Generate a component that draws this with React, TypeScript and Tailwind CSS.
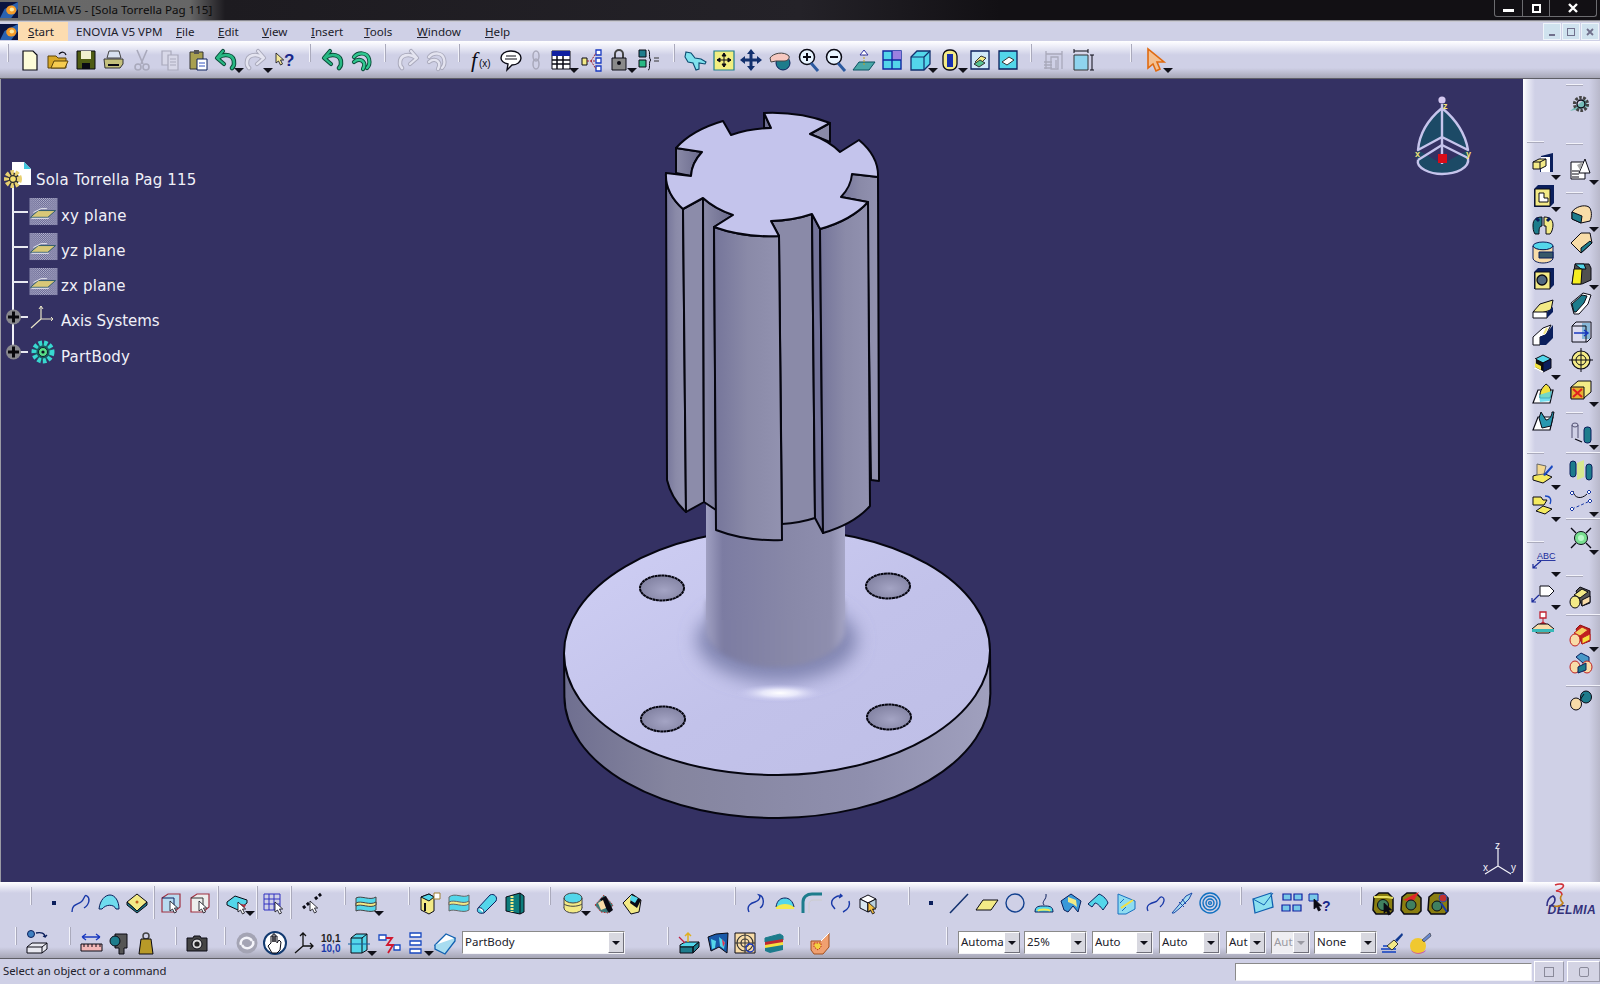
import type { ReactNode } from 'react';

// Shared colours for the little toolbar pictures
const NAVY = '#0b1f5c';
const CYAN = '#53d6ea';
const YEL = '#f3ea86';
const CREAM = '#f8dca8';
const TEAL = '#1d7c8c';
const GRN = '#28b884';
const GRY = '#a9a9bb';
const K = '#0a0a14';

const cube = (top: string, front: string, side: string) => (
  <>
    <path d="M4 8l8-4 8 4-8 4z" fill={top} stroke={K} strokeLinejoin="round" />
    <path d="M4 8v9l8 4v-9z" fill={front} stroke={K} strokeLinejoin="round" />
    <path d="M20 8v9l-8 4v-9z" fill={side} stroke={K} strokeLinejoin="round" />
  </>
);

const cursor = (x: number, y: number, fill = '#fff') => (
  <path transform={`translate(${x} ${y})`} d="M0 0v10l2.5-2 2 4 2-1-2-4h3.2z" fill={fill} stroke={K} strokeWidth="0.8" />
);

// hooked arrow drawn twice, outline then fill, the way the undo glyphs look
const hook = (line: string, fill: string, mirror = false) => (
  <g transform={mirror ? 'matrix(-1 0 0 1 24 0)' : undefined} fill="none" strokeLinecap="round" strokeLinejoin="round">
    <path d="M4 10C10 5 21 6 20 16c0 1-1 3-2 4" stroke={line} strokeWidth="4.6" />
    <path d="M9 3L3 10l7 6" stroke={line} strokeWidth="4.2" />
    <path d="M4 10C10 5 21 6 20 16c0 1-1 3-2 4" stroke={fill} strokeWidth="2.6" />
    <path d="M9 3L3 10l7 6" stroke={fill} strokeWidth="2.2" />
  </g>
);

const icons: Record<string, ReactNode> = {
  // top toolbar
  new: <path d="M5 3h10l4 4v15H5z" fill="#fdfbd8" stroke={K} strokeWidth="1.2" />,
  open: <><path d="M2 8h8l2 2h8v10H2z" fill="#d8a828" stroke="#5a4208" /><path d="M5 20l3-7h14l-3 7z" fill="#f6cc50" stroke="#5a4208" /><path d="M13 6c3-3 6-2 7 1" fill="none" stroke={K} strokeWidth="1.2" /></>,
  save: <><path d="M3 3h18v18H3z" fill="#4f5c14" stroke={K} /><path d="M7 3h10v8H7z" fill="#f0f0d0" /><path d="M8 15h8v6H8z" fill={K} /></>,
  print: <><path d="M7 3h10l2 7H5z" fill="#d8e0f0" stroke="#444" /><path d="M2 11h19v5l-3 4H3z" fill="#c4c07c" stroke="#333" /><path d="M6 17h11" stroke={K} strokeWidth="2" /></>,
  cut: <g fill="none" stroke={GRY} strokeWidth="1.6"><path d="M7 2l6 14M17 2l-6 14" /><circle cx="8" cy="19" r="3" /><circle cx="16" cy="19" r="3" /></g>,
  copy: <g fill="#d8d8e8" stroke={GRY} strokeWidth="1.2"><path d="M4 3h9v14H4z" /><path d="M10 7h10v15H10z" /><path d="M12 11h6M12 14h6M12 17h6" /></g>,
  paste: <><path d="M4 4h13v17H4z" fill="#a8a050" stroke="#333" /><path d="M8 2h5v4H8z" fill="#555" /><path d="M11 11h10v11H11z" fill="#fff" stroke={NAVY} /><path d="M13 15h6M13 18h6" stroke="#3050c0" /></>,
  undo: hook('#0a4a38', GRN),
  redoOff: hook(GRY, '#e4e4f0', true),
  help: <>{cursor(3, 5, '#f4e89a')}<text x="11" y="18" fontFamily="Liberation Sans" fontWeight="700" fontSize="17" fill="#18288a">?</text></>,
  undoB: hook('#0a4a38', GRN),
  redoG: <g fill="none" strokeLinecap="round"><path d="M5 9c4-5 13-5 15 2 1 4 0 7-2 9M5 14c3-3 8-3 10 1 1 2 0 4-1 6" stroke="#0a4a38" strokeWidth="4.2" /><path d="M5 9c4-5 13-5 15 2 1 4 0 7-2 9M5 14c3-3 8-3 10 1 1 2 0 4-1 6" stroke="#30c890" strokeWidth="2.4" /></g>,
  redoOff2: <g fill="none" strokeLinecap="round"><path d="M5 9c4-5 13-5 15 2 1 4 0 7-2 9M5 14c3-3 8-3 10 1 1 2 0 4-1 6" stroke={GRY} strokeWidth="4.2" /><path d="M5 9c4-5 13-5 15 2 1 4 0 7-2 9M5 14c3-3 8-3 10 1 1 2 0 4-1 6" stroke="#e4e4f0" strokeWidth="2.4" /></g>,
  fx: <><text x="1" y="19" fontFamily="Liberation Serif" fontStyle="italic" fontSize="22" fill={K}>f</text><text x="9" y="19" fontFamily="Liberation Sans" fontSize="10" fill={K}>(x)</text></>,
  speech: <><path d="M12 3c6 0 10 3 10 7s-4 7-9 7l-5 5 1-6c-4-1-7-3-7-6 0-4 4-7 10-7z" fill="#fff" stroke={K} strokeWidth="1.4" /><path d="M7 8h10M6 11h12" stroke={K} /></>,
  chain: <g fill="none" stroke={GRY} strokeWidth="1.5"><ellipse cx="12" cy="8" rx="3" ry="5" /><ellipse cx="12" cy="16" rx="3" ry="5" /></g>,
  table: <><path d="M3 3h18v18H3z" fill="#fff" stroke={K} /><path d="M3 3h18v5H3z" fill="#1020a0" /><path d="M3 12h18M3 16h18M8 8v13M14 8v13" stroke={K} strokeWidth="1.5" /></>,
  net: <><path d="M3 10h5v7H3z" fill={YEL} stroke={K} /><g fill="#fff" stroke="#1838c0" strokeWidth="1.3"><path d="M17 2h5v5h-5zM17 10h5v5h-5zM17 18h5v5h-5z" /></g><path d="M8 13h9M12 13l5-8M12 13l5 8" stroke="#a02030" strokeDasharray="2 1" /></>,
  lock: <><path d="M8 11V6a4 4 0 018 0v5" fill="none" stroke="#444" strokeWidth="2" /><path d="M5 10h14v12H5z" fill="#8a8a8a" stroke={K} /><circle cx="12" cy="15" r="2" fill={K} /></>,
  eq: <><path d="M2 2h7v7H2z" fill={TEAL} stroke={K} /><path d="M2 12h7v7H2z" fill={GRN} stroke={K} /><path d="M11 2c3 0 0 9 3 10-3 1 0 10-3 10" fill="none" stroke={K} /><path d="M17 10h5M17 13h5" stroke="#333" /></>,
  plane: <path d="M2 4l5 1 4 5 6 1 5 3-1 2-6-1 0 6-3 1-3-7-5-1-3-5z" fill="#7fe2ee" stroke="#0a4a70" strokeWidth="1.1" />,
  fit: <><path d="M2 3h20v19H2z" fill="#f2ee80" stroke={TEAL} strokeWidth="1.2" /><path d="M12 5v14M5 12h14M12 5l-2 3h4zM12 19l-2-3h4zM5 12l3-2v4zM19 12l-3-2v4z" fill={K} stroke={K} /></>,
  pan: <path d="M12 1l4 5h-2.5v4.5H18V8l5 4-5 4v-2.5h-4.5V18H16l-4 5-4-5h2.5v-4.5H6V16l-5-4 5-4v2.5h4.5V6H8z" fill="#12306e" />,
  rot: <><circle cx="15" cy="15" r="7" fill={TEAL} stroke={NAVY} /><path d="M2 10c3-5 14-7 19-2 1 3-2 5-5 5H8l-5 1z" fill="#f6c8c0" stroke="#444" /></>,
  zoomIn: <><circle cx="10" cy="9" r="7.5" fill="#e8f4ff" stroke={K} strokeWidth="1.5" /><path d="M14 15l7 8" stroke="#2c5aa0" strokeWidth="3" /><path d="M6 9h8M10 5v8" stroke={K} strokeWidth="2" /></>,
  zoomOut: <><circle cx="10" cy="9" r="7.5" fill="#e8f4ff" stroke={K} strokeWidth="1.5" /><path d="M14 15l7 8" stroke="#2c5aa0" strokeWidth="3" /><path d="M6 9h8" stroke={K} strokeWidth="2" /></>,
  normal: <><path d="M1 22l6-8h16l-6 8z" fill="#4aa8a8" stroke="#0a5060" /><path d="M12 17V3" stroke="#c0a020" strokeDasharray="2 1" /><path d="M8 7l4-5 4 5z" fill="#fff" stroke="#3030a0" /></>,
  quad: <><path d="M3 3h18v18H3z" fill={CYAN} stroke="#1028a0" strokeWidth="1.4" /><path d="M12 3h9v9h-9z" fill="#9a80e0" /><path d="M12 3v18M3 12h18" stroke="#1028a0" strokeWidth="1.4" /></>,
  cubeC: <><path d="M3 9l6-6h13v13l-6 6H3z" fill={CYAN} stroke="#12306e" strokeWidth="1.3" /><path d="M3 9h13v13M16 9l6-6" fill="none" stroke="#12306e" strokeWidth="1.2" /></>,
  cylN: <><rect x="5" y="2" width="14" height="20" rx="6" fill={YEL} stroke={K} strokeWidth="1.3" /><path d="M9 6h6v13H9z" fill="#1830b0" /></>,
  boxA: <><path d="M3 3h18v18H3z" fill="#cfe8f8" stroke={NAVY} strokeWidth="1.3" /><path d="M7 14l6-6 5 2-6 6z" fill={YEL} stroke="#333" /><path d="M6 16l6-4 5 3-6 4z" fill="#55c090" stroke="#333" /></>,
  boxB: <><path d="M3 3h18v18H3z" fill={CYAN} stroke={NAVY} strokeWidth="1.3" /><path d="M6 14l7-5 5 3-7 5z" fill="#fff" stroke="#333" /></>,
  grayDim: <g stroke={GRY} fill="none" strokeWidth="1.3"><path d="M4 3v18M20 3v18M4 6h16M9 9h7v12H9zM2 14h8M2 17h8M2 20h8M14 12v8" /></g>,
  blueDim: <><path d="M4 7h14v15H4z" fill="#8fd4ee" stroke="#333" /><path d="M4 3h14M4 1v4M18 1v4M22 7v15M20 7h4M20 22h4" stroke={K} /></>,
  cursorO: <path d="M5 1v19l5-4 3 7 4-2-3-7h7z" fill="#f4c090" stroke="#e06a10" strokeWidth="1.6" />,

  // bottom row one
  point: <rect x="10" y="10" width="4" height="4" fill={NAVY} />,
  curve: <path d="M3 21c0-8 5-7 9-10s3-8 6-6 3 8-3 12" fill="none" stroke="#1838a8" strokeWidth="1.4" />,
  surf: <><path d="M2 18c1-9 6-14 11-14s9 6 9 14l-3 0c-2-5-10-5-14 0z" fill="#6fdcee" stroke={NAVY} /></>,
  tile: <><path d="M2 11l10-8 10 8-10 9z" fill={YEL} stroke={K} /><path d="M2 11v3l10 8 10-8v-3l-10 9z" fill={TEAL} stroke={K} /><circle cx="12" cy="11" r="1.5" fill="#c06020" /></>,
  boxPick: <><path d="M3 7l6-4h12v13l-6 5H3z" fill="#b8dcf0" stroke="#a03040" strokeWidth="1.2" /><path d="M3 7h12v14" fill="none" stroke={NAVY} />{cursor(11, 10, '#fff')}</>,
  boxPick2: <><path d="M3 7l6-4h12v13l-6 5H3z" fill="#eee" stroke="#a03040" strokeWidth="1.2" /><path d="M3 7h12v14" fill="none" stroke="#333" />{cursor(11, 10, '#fff')}</>,
  stack: <><path d="M2 11l8-6 12 4v3l-9 7-11-5z" fill={CYAN} stroke={K} /><path d="M12 12l9 2-3 5z" fill="#c03040" />{cursor(13, 11, '#fff')}</>,
  gridPick: <><path d="M2 3h16v16H2z" fill="none" stroke="#3030c0" /><path d="M7 3v16M12 3v16M2 8h16M2 13h16" stroke="#3030c0" />{cursor(13, 11, '#fff')}</>,
  spark: <><path d="M3 17l6-5M15 8l6-5" stroke={K} strokeWidth="3" strokeDasharray="3 2" />{cursor(10, 10, '#fff')}</>,
  layers: <><path d="M2 7c5-3 14 3 20-1v13c-6 4-15-2-20 1z" fill={CYAN} stroke="#444" /><path d="M2 12c5-3 14 3 20-1v3c-6 4-15-2-20 1z" fill={YEL} stroke="#444" /></>,
  sculpt: <><path d="M3 6l8-3 5 3v14l-5 3-8-4z" fill={YEL} stroke={K} /><path d="M3 6l8 4 5-4-5-3z" fill={CYAN} stroke={K} /><path d="M16 2h6v6h-6z" fill="#fff" stroke="#a08030" /><path d="M7 12v8" stroke={K} strokeWidth="2" /></>,
  layers2: <><path d="M2 6c6-5 14 2 20-2v4c0 4 0 7 0 11-6 4-15-2-20 1z" fill={CYAN} stroke="#666" /><path d="M2 11c6-3 14 3 20-1v3c-6 4-15-2-20 1z" fill={YEL} stroke="#666" /></>,
  capsule: <><path d="M3 17L15 4c4-2 8 2 6 6L9 22c-5 1-8-1-6-5z" fill={CYAN} stroke={NAVY} /><path d="M3 17c3-1 6 1 6 5" fill="#fff" stroke={NAVY} /></>,
  ribbed: <><path d="M3 6l14-4 4 3v16l-4 2-14-3z" fill="#0d7c7c" stroke={K} /><path d="M9 5v16" stroke={YEL} strokeWidth="3" strokeDasharray="2 1" /><path d="M17 2v21" stroke={K} /></>,
  cylY: <><ellipse cx="12" cy="17" rx="9" ry="5" fill={YEL} stroke="#444" /><path d="M3 7h18v10H3z" fill={YEL} /><ellipse cx="12" cy="7" rx="9" ry="5" fill={CYAN} stroke="#444" /><path d="M3 7v10M21 7v10M3 13c4 3 14 3 18 0" fill="none" stroke="#444" /></>,
  meshA: <><path d="M3 14L12 4l9 10-5 8-7-1z" fill="#3a7a7a" stroke="#c03030" strokeDasharray="1.5 1.5" /><path d="M8 8l6-3 7 14-4 3z" fill={K} /><path d="M6 12l5-3 3 8-5 2z" fill={CREAM} /></>,
  meshB: <><path d="M3 12L12 3l9 6-2 12-8 2z" fill={YEL} stroke={K} /><path d="M12 3l9 6-4 8-7-5z" fill={K} /><path d="M11 4l7 3-3 5-5-3z" fill={CYAN} /></>,
  wave: <path d="M5 21c-3-6 2-9 6-10s6-5 4-7c5 1 6 10 1 13" fill="none" stroke="#1838a8" strokeWidth="1.4" />,
  surfY: <><path d="M3 16c1-7 5-9 9-9s8 3 9 9z" fill={CYAN} stroke={NAVY} /><path d="M3 16c5-4 13-4 18 0v2H3z" fill="#f4ea50" /></>,
  fillet: <><path d="M3 22V11c0-5 4-8 9-8h10" fill="none" stroke={TEAL} strokeWidth="3" /><path d="M9 22v-9c0-2 2-4 4-4h9" fill="none" stroke="#ccc" strokeWidth="1" /></>,
  twoArc: <path d="M4 14c-2-6 5-10 10-9M12 3l2 2-3 2M21 10c2 6-2 9-6 11M4 14l3 4" fill="none" stroke="#1838a8" strokeWidth="1.4" />,
  cubePick: <>{cube('#fff', '#d8e8f0', '#b8d0dc')}{cursor(12, 11, '#f4c040')}</>,
  line: <path d="M3 22L21 3" stroke="#12306e" strokeWidth="1.5" />,
  para: <path d="M2 19l7-10h15l-7 10z" fill={YEL} stroke={K} />,
  circle: <circle cx="12" cy="12" r="9" fill="none" stroke="#12408e" strokeWidth="1.4" />,
  sweep: <><path d="M3 21c0-6 4-6 9-6s9 0 9 6z" fill={CYAN} stroke={NAVY} /><path d="M6 20c1-2 11-2 12 0" stroke="#f4ea50" strokeWidth="2" fill="none" /><path d="M12 14c-3-4 3-5 2-11" fill="none" stroke={NAVY} /></>,
  patch: <><path d="M2 10l10-7 10 7-3 11-5-6-5 6-4-2z" fill="#3a98d8" stroke={NAVY} /><path d="M9 6l8 3 1 7-4-3-5-2z" fill={YEL} /></>,
  arch: <path d="M2 13L13 3c5 2 8 6 9 9l-5 7c-3-4-6-7-8-7l-3 4z" fill={CYAN} stroke={NAVY} />,
  hatch: <><path d="M4 3l17 7v8l-9 5H4z" fill="#8fdcf0" stroke="#1870c0" /><path d="M7 17l12-8" stroke="#f4e040" strokeWidth="2" /><path d="M6 12l4-4M8 20l4-4" stroke="#1870c0" /></>,
  blob: <path d="M5 20c-3-6 3-8 7-9s4-6 7-5 3 6-2 10" fill="none" stroke="#1838a8" strokeWidth="1.3" />,
  spring: <><path d="M2 22l6-7 8-10 6-3-3 6-9 9-6 5z" fill="#a8dcf0" stroke="#1848a8" /><path d="M9 11l5 5M12 8l4 5" stroke="#1848a8" /></>,
  spiral: <g fill="none" stroke="#1070c0" strokeWidth="1.4"><circle cx="12" cy="12" r="10" /><circle cx="12" cy="12" r="7" /><circle cx="12" cy="12" r="4" /><circle cx="12" cy="12" r="1.4" /></g>,
  mail: <><path d="M2 8l18-6 2 14-18 6z" fill="#8ce0f0" stroke="#1060b0" strokeWidth="1.3" /><path d="M2 8l11 6 9-12" fill="none" stroke="#1060b0" /></>,
  fourBox: <g fill="#78c8e8" stroke="#1020a0" strokeWidth="1.2"><path d="M3 3h8v6H3zM14 3h8v6h-8zM2 14h8v6H2zM13 14h8v6h-8z" /></g>,
  qBox: <><path d="M1 3h9v7H1z" fill="#78c8e8" stroke="#1020a0" />{cursor(6, 8, K)}<text x="14" y="20" fontFamily="Liberation Sans" fontWeight="700" fontSize="14" fill="#18288a">?</text></>,
  gauge: <><path d="M3 6l5-4h9l5 5v13l-3 3H5l-3-4z" fill="#8a7e10" stroke={K} strokeWidth="1.5" /><path d="M3 6h13l6 1" stroke="#e8e060" strokeWidth="2" fill="none" /><circle cx="12" cy="14" r="5.5" fill="#408060" stroke={K} />{cursor(13, 12, K)}</>,
  gauge2: <><path d="M3 6l5-4h9l5 5v13l-3 3H5l-3-4z" fill="#8a7e10" stroke={K} strokeWidth="1.5" /><path d="M4 9L20 1l-6 10z" fill="#e02828" /><circle cx="12" cy="14" r="5" fill="#408060" stroke={K} /></>,
  gauge3: <><path d="M3 6l5-4h9l5 5v13l-3 3H5l-3-4z" fill="#8a7e10" stroke={K} strokeWidth="1.5" /><circle cx="11" cy="15" r="5" fill="#408060" stroke={K} /><circle cx="17" cy="7" r="4" fill="#c03030" stroke="#3050a0" /><path d="M15 12l6 9" stroke="#1838a8" strokeWidth="2" /></>,

  // bottom row two
  insert: <><circle cx="6" cy="3" r="3.5" fill="#4080c0" stroke={NAVY} /><path d="M11 2c5-1 9 0 9 4l-2-1m2 1l2-2" fill="none" stroke={NAVY} strokeWidth="1.3" /><path d="M2 16l5-4h15v6l-5 4H2z" fill="#e8e8f0" stroke={K} /><path d="M2 16h15v6M17 16l5-4" fill="none" stroke={K} /></>,
  measure: <><path d="M2 6h18M2 6l4-3M2 6l4 3M20 6l-4-3M20 6l-4 3" fill="none" stroke="#1838c0" strokeWidth="1.3" /><path d="M1 13h21v7H1z" fill="#f4b8b8" stroke={K} /><path d="M4 13v3M8 13v3M12 13v3M16 13v3M20 13v3" stroke={K} /></>,
  caliper: <><path d="M7 3h12v14h-3v6h-5v-6H7z" fill="#555" stroke={K} /><circle cx="7" cy="10" r="5" fill={TEAL} stroke={K} /></>,
  weight: <><circle cx="12" cy="5" r="3" fill="none" stroke="#444" strokeWidth="1.5" /><path d="M7 8h10l2 15H5z" fill="#b89a28" stroke={K} /></>,
  camera: <><path d="M2 7h6l1-2h6l1 2h6v13H2z" fill="#444" stroke={K} /><circle cx="12" cy="13" r="5" fill="#ddd" stroke={K} /><circle cx="12" cy="13" r="2.6" fill="#222" /></>,
  swirl: <><circle cx="12" cy="12" r="10.5" fill="#a4a4b4" /><path d="M6 14c-2-7 8-10 11-4M18 10c2 7-8 10-11 4" fill="none" stroke="#f4f4fa" strokeWidth="2.6" /></>,
  hand: <><circle cx="12" cy="12" r="11" fill="#fff" stroke="#123a70" strokeWidth="2" /><path d="M8 12V5h2v6-8h2v8-6h2v7l2-3 2 2-1 8-3 3H9l-4-7 1-1z" fill="#fff" stroke={K} /></>,
  axis: <path d="M11 2v13M11 15h10M11 15L3 22M8 5l3-3 3 3M18 12l3 3-3 3" fill="none" stroke="#111" strokeWidth="1.3" />,
  num: <><text x="3" y="11" fontFamily="Liberation Sans" fontWeight="700" fontSize="10" fill="#222">10,1</text><text x="3" y="21" fontFamily="Liberation Sans" fontWeight="700" fontSize="10" fill="#1838a8">10,0</text></>,
  cubeAx: <><path d="M4 7l5-4h11v16l-5 3H4z" fill={CYAN} stroke={K} /><path d="M4 7h11v15M15 7l5-4" fill="none" stroke={K} /><path d="M1 13h22" stroke="#1060a0" /></>,
  link: <><path d="M2 4h7v5H2zM17 14h6v5h-6z" fill="#fff" stroke="#1848c0" strokeWidth="1.3" /><path d="M9 7h6L10 14h6l-5 8" fill="none" stroke="#d01830" strokeWidth="1.8" /></>,
  rows: <g fill="#fff" stroke="#1848c0" strokeWidth="1.3"><path d="M6 2h11v4H6zM6 10h11v4H6zM6 18h11v4H6z" /></g>,
  bookC: <><path d="M2 14L13 3l9 4-10 13z" fill="#fff" stroke="#1060b0" strokeWidth="1.3" /><path d="M2 14v4l10 5 10-13V7" fill="#a8dcf0" stroke="#1060b0" strokeWidth="1.3" /></>,
  liftA: <><path d="M3 14l5-3h14l-6 5H3z" fill={CYAN} stroke={K} /><path d="M3 16h13v6H3zM16 16l6-5v5l-6 6z" fill={TEAL} stroke={K} /><path d="M11 2v9M8 5l3-3 3 3" fill="none" stroke="#e0b020" strokeWidth="1.5" /><path d="M2 6l6 6" stroke="#c02040" strokeWidth="1.3" /></>,
  twist: <><path d="M2 6l8-3 12-1-1 20-8-6-8 4z" fill="#1858a8" stroke={K} /><path d="M5 8l5 2-1 7-3 1zM13 6l6 5-1 7-4-3z" fill={CYAN} /><path d="M16 8l3 4-2 4z" fill="#e03050" /></>,
  target: <><path d="M2 2h20v20H2z" fill={CREAM} stroke={K} /><circle cx="12" cy="12" r="8" fill="none" stroke="#333" strokeWidth="1.2" /><circle cx="12" cy="12" r="4" fill="none" stroke="#333" strokeWidth="1.2" /><path d="M12 2v20M2 12h20" stroke="#333" /><circle cx="17" cy="17" r="4" fill="none" stroke="#1838c0" strokeWidth="1.4" /></>,
  stackT: <><path d="M3 7l15-4 3 2v4L6 13 3 11z" fill={TEAL} stroke={TEAL} /><path d="M3 11l18-3v5L3 16z" fill="#c02830" /><path d="M3 14l18-3v3L3 18z" fill="#f4e040" /><path d="M3 17l18-3v5L8 22l-5-2z" fill={TEAL} /></>,
  fistO: <><path d="M3 10h10l8-8v14l-6 7H6l-3-4z" fill="#f0a070" stroke="#a05020" /><path d="M6 12h7v4l-3 3-4-3z" fill="#f4d040" stroke="#c03020" strokeDasharray="1.5 1" /><path d="M13 10l8-8" stroke="#fff" /></>,
  brush: <><path d="M1 18h15M2 21h14M3 15h11" stroke="#1040c0" strokeWidth="1.6" /><path d="M7 15l7-6 4 4-6 6z" fill={YEL} stroke="#333" /><path d="M15 9l7-7 1 2-6 7z" fill="#123a90" /></>,
  ball: <><circle cx="10" cy="15" r="8" fill="#f0c830" /><path d="M3 19c3 4 11 4 15 0-2 5-13 5-15 0z" fill="#c040c0" /><path d="M14 9l8-7 1 3-7 6z" fill="#6888d0" stroke="#333" strokeWidth="0.6" /></>,

  // right panel, first column
  pad: <><path d="M10 5l12-3v19H9z" fill={NAVY} /><path d="M10 6h9v15h-9z" fill="#fff" /><path d="M2 11l6-3h7v7l-6 3H2z" fill={YEL} stroke={K} /><path d="M2 11h7v7M9 11l6-3" fill="none" stroke={K} /></>,
  pocket: <><path d="M3 6l4-4h16v18l-4 4H3z" fill={NAVY} /><path d="M4 6h15v17H4z" fill={YEL} stroke={K} /><path d="M8 10h5v5h4v4H8z" fill="#fff" stroke={K} /></>,
  shaft: <><path d="M2 12c0-5 3-8 9-8v9c-3 0-3 4-3 8H4C2 18 2 15 2 12z" fill={TEAL} stroke={K} /><path d="M13 4c6 0 9 3 9 8 0 3-1 7-3 9h-4v-8h-2z" fill={YEL} stroke={K} /><path d="M5 5l3 3M19 5l-3 3" stroke={NAVY} strokeWidth="3" /></>,
  groove: <><ellipse cx="12" cy="6" rx="10" ry="4" fill={CYAN} stroke={NAVY} /><path d="M2 6v12c0 3 5 5 10 5s10-2 10-5V6c-2 5-18 5-20 0z" fill={CREAM} stroke={NAVY} /><path d="M8 12h14v6H8z" fill="#385868" stroke={NAVY} /></>,
  hole: <><path d="M3 6l4-4h16v17l-4 4H3z" fill={NAVY} /><path d="M4 6h15v17H4z" fill={YEL} stroke={K} /><circle cx="11" cy="14" r="5" fill="#506880" stroke={K} strokeWidth="1.3" /></>,
  rib: <><path d="M2 16l7-8 13-4-2 10-10 3z" fill={YEL} stroke={K} /><path d="M2 16h14v6H2z" fill="#fff" stroke={K} /><path d="M16 16l6-5v5l-6 6z" fill={NAVY} /></>,
  slot: <><path d="M2 14l10-9 8-3-5 10-6 2v8H2z" fill="#fff" stroke={K} /><path d="M9 14l6-3 7-9v13l-7 7h-6z" fill={NAVY} /><path d="M13 11l3-6" stroke={YEL} strokeWidth="2" /></>,
  stiff: <>{cube(CYAN, '#111', NAVY)}<path d="M4 8v9l8 4" fill="none" stroke="#fff" strokeWidth="1.5" /><path d="M4 12l6 3v4l-6-3z" fill="#f0e040" /></>,
  solid: <><path d="M2 22l5-13h15l-3 13z" fill="#fff" stroke={K} strokeWidth="1.2" /><path d="M9 17c-1-8 4-12 6-14 5 3 6 8 4 14z" fill="#f0e040" stroke={K} /><path d="M8 14l13-4-2 10-10 1z" fill={CYAN} opacity="0.8" /></>,
  remove: <><path d="M2 22l5-13h15l-3 13z" fill="#fff" stroke={K} strokeWidth="1.2" /><path d="M8 10l2-6 5 8c3 0 6-4 6-8l2 0-3 14-9 2z" fill="#2898b0" stroke={K} /></>,
  penPad: <><path d="M2 15l10-3 9 4-9 6-10-3z" fill="#f4ea60" stroke={K} /><path d="M6 14V3l9 2-2 8z" fill="#f4d890" stroke="#666" /><path d="M12 14L21 4l1 2-8 9z" fill="#1848c0" /></>,
  folderPad: <><path d="M2 4h8l2 3h4l-3 5H2z" fill="#f4ea60" stroke={K} /><path d="M5 18l7-5 9 3-7 5z" fill="#f4ea60" stroke={K} /><path d="M14 3c5 0 7 3 5 8" fill="none" stroke="#1848c0" strokeWidth="1.3" /></>,
  abc: <><text x="6" y="11" fontFamily="Liberation Sans" fontSize="9" fill="#1a2a9a" textDecoration="underline">ABC</text><path d="M10 13l-8 7m0-4v4h4" fill="none" stroke="#1a2a9a" strokeWidth="1.2" /></>,
  flag: <><path d="M9 5h9l5 5-5 5H9z" fill="#fff" stroke={K} /><path d="M8 14l-7 7m0-4v4h4" fill="none" stroke="#1a2a9a" strokeWidth="1.2" /></>,
  stamp: <><path d="M9 1h6v6H9z" fill="#fff" stroke="#c02030" strokeWidth="1.3" /><path d="M12 7v5M6 15l6-4 6 4z" fill="#e03030" stroke="#c02030" /><path d="M1 18l6-5h10l6 5-5 4H6z" fill={CREAM} stroke={K} /><path d="M1 18h22v3H1z" fill="#38b8b8" /></>,

  // right panel, second column
  gearT: <><path d="M1 18L16 6l4 8z" fill="#3ab09a" opacity="0.6" /><circle cx="12" cy="11" r="6.5" fill="none" stroke="#444" strokeWidth="3.2" strokeDasharray="2.6 1.4" /><circle cx="12" cy="11" r="4" fill="none" stroke={K} strokeWidth="1.4" /></>,
  sketch: <><path d="M2 6h14v17H2z" fill="#fff" stroke={K} /><path d="M16 3l-6 14h11z" fill="#fff" stroke={K} /><path d="M3 15h7M3 18h7M3 21h7" stroke={K} strokeWidth="1.2" /><path d="M8 9l6-3-3 8z" fill="#aaa" /></>,
  round: <><path d="M3 9c3-5 12-8 17-5 3 3 3 10 1 14l-9 2-9-4z" fill={CREAM} stroke={K} /><path d="M3 9l10 4-1 7-9-4z" fill={TEAL} stroke={K} /></>,
  chamfer: <><path d="M2 12L12 2h9l2 10-11 10z" fill={CREAM} stroke={K} /><path d="M12 22l11-10-2-2-9 7z" fill={TEAL} stroke={K} /></>,
  cubeY: <><path d="M6 3h14l2 4v12l-9 4H3z" fill="#505050" stroke={K} /><path d="M6 3h9l2 5-5 0z" fill={CYAN} stroke={K} /><path d="M5 8h8l-1 15H3z" fill="#f6ee20" stroke={K} /></>,
  sCurve: <><path d="M2 12L14 2l8 2-3 9-9 10H5z" fill="#fff" stroke={K} /><path d="M3 13L13 4l5 1-3 7-8 9H5z" fill={TEAL} stroke={K} /></>,
  gridArrow: <><path d="M3 6l4-4h15v16l-4 4H3z" fill="#dcdcf0" stroke={K} /><path d="M13 3h8v16h-8z" fill="#88b8d8" /><path d="M3 6h14v16" fill="none" stroke={K} /><path d="M5 13h14M15 10l4 3-4 3" fill="none" stroke="#1838c0" strokeWidth="1.5" /></>,
  crosshair: <><circle cx="12" cy="12" r="9" fill={YEL} stroke={K} strokeWidth="1.2" /><circle cx="12" cy="12" r="5" fill="none" stroke={K} /><path d="M12 0v24M0 12h24" stroke={K} /></>,
  boxX: <><path d="M2 9l7-6h13v11l-7 6H2z" fill={YEL} stroke={K} /><path d="M2 9h13v12H2z" fill="#e8b030" stroke={K} /><path d="M4 11l9 8M13 11l-9 8" stroke="#e02020" strokeWidth="2" /></>,
  cylArrow: <><g fill="none" stroke="#557"><ellipse cx="6" cy="4" rx="3" ry="2" /><path d="M3 4v13M9 4v13" /></g><rect x="15" y="6" width="7" height="16" rx="3" fill={TEAL} stroke={NAVY} /><path d="M6 18l7 3" stroke={K} strokeWidth="1.3" /></>,
  cylPlane: <><rect x="1" y="3" width="6" height="16" rx="3" fill={TEAL} stroke={NAVY} /><path d="M8 5l7-3v17l-7 3z" fill="#d8e890" /><rect x="17" y="6" width="6" height="16" rx="3" fill={TEAL} stroke={NAVY} /></>,
  arrowDots: <><path d="M3 21l18-8" stroke="#1838a8" strokeDasharray="3 2" /><path d="M4 3c1 7 8 9 14 3" fill="none" stroke={K} /><path d="M3 3l2 2-2 2-2-2zM20 2l2 2-2 2-2-2zM3 19l2 2-2 2-2-2zM21 11l2 2-2 2-2-2z" fill="#fff" stroke="#1838a8" /></>,
  orb: <><circle cx="12" cy="12" r="6.5" fill="#78e090" stroke={K} /><circle cx="12" cy="12" r="3" fill="#b8f8c8" /><path d="M2 2l5 5M22 2l-5 5M2 22l5-5M22 22l-5-5" stroke={K} strokeWidth="1.4" /></>,
  partA: <><path d="M7 6l4-4 10 4v12l-8 3z" fill="#555" stroke={K} /><path d="M5 10l8-6 6 3-8 6z" fill={YEL} stroke={K} /><ellipse cx="6" cy="17" rx="5" ry="6" fill={YEL} stroke={K} /><path d="M13 15l8-4v6l-8 4z" fill={CREAM} stroke={K} /></>,
  partB: <><path d="M7 6l4-4 10 4v12l-8 3z" fill="#c02020" stroke="#901010" /><path d="M5 10l8-6 6 3-8 6z" fill="#f4d060" stroke="#c02020" /><ellipse cx="6" cy="17" rx="5" ry="6" fill={CREAM} stroke="#c02020" /><path d="M13 15l8-4v6l-8 4z" fill="#f4e040" stroke="#c02020" /></>,
  partC: <><path d="M7 6l5-4 8 4v6h-6z" fill="#4898c8" stroke={NAVY} /><ellipse cx="6" cy="16" rx="5" ry="6" fill={CREAM} stroke="#c02020" /><ellipse cx="18" cy="16" rx="5" ry="6" fill={CREAM} stroke="#c02020" /><path d="M9 16l8-4v7l-8 3z" fill={TEAL} stroke={NAVY} /></>,
  pair: <><ellipse cx="7" cy="16" rx="5.5" ry="6" fill={CREAM} stroke={K} /><ellipse cx="17" cy="9" rx="5.5" ry="6" fill={TEAL} stroke={K} /><path d="M11 12l4-6" stroke={K} /></>,
};

type Item = { n?: string; w?: string; dd?: boolean; sep?: boolean; long?: boolean; gap?: boolean };

function Icon({ name }: { name: string }) {
  return (
    <svg viewBox="0 0 24 24" className="w-[24px] h-[24px] shrink-0 overflow-visible">
      {icons[name]}
    </svg>
  );
}

function Arrow() {
  return <span className="absolute top-[24px] left-1/2 ml-[8px] w-0 h-0 border-x-[5px] border-x-transparent border-t-[5px] border-t-[#101018]" />;
}

function Bar({ items }: { items: Item[] }) {
  return (
    <>
      {items.map((it, i) => {
        const w = it.w ?? 'w-[28px]';
        if (it.gap) return <div key={i} className={`${w} shrink-0`} />;
        if (it.sep)
          return (
            <div key={i} className={`${w} shrink-0 h-full flex justify-center items-center`}>
              <div className={`w-[2px] bg-[#f2f2fa] border-r border-[#aaaabc] ${it.long ? 'h-[33px]' : 'h-[18px] -mt-[14px]'}`} />
            </div>
          );
        return (
          <div key={i} className={`relative ${w} shrink-0 h-[32px] flex items-center justify-center`}>
            <Icon name={it.n!} />
            {it.dd && <Arrow />}
          </div>
        );
      })}
    </>
  );
}

const topBar: Item[] = [
  { sep: true, w: 'w-[16px]' },
  { n: 'new' }, { n: 'open' }, { n: 'save' }, { n: 'print' }, { n: 'cut' }, { n: 'copy' }, { n: 'paste' },
  { n: 'undo', dd: true }, { n: 'redoOff', w: 'w-[30px]', dd: true }, { n: 'help', w: 'w-[30px]' },
  { sep: true, w: 'w-[19px]' }, { n: 'undoB' }, { n: 'redoG' },
  { sep: true, w: 'w-[19px]' }, { n: 'redoOff' }, { n: 'redoOff2' },
  { sep: true, w: 'w-[18px]' }, { n: 'fx' }, { n: 'speech', w: 'w-[30px]' }, { n: 'chain', w: 'w-[20px]' },
  { n: 'table', w: 'w-[30px]', dd: true }, { n: 'net', w: 'w-[30px]' }, { n: 'lock', w: 'w-[26px]', dd: true }, { n: 'eq', w: 'w-[34px]' },
  { sep: true, w: 'w-[16px]' }, { n: 'plane' }, { n: 'fit', w: 'w-[27px]' }, { n: 'pan' }, { n: 'rot', w: 'w-[30px]' },
  { n: 'zoomIn', w: 'w-[27px]' }, { n: 'zoomOut' }, { n: 'normal' }, { n: 'quad' }, { n: 'cubeC', dd: true },
  { n: 'cylN', w: 'w-[32px]', dd: true }, { n: 'boxA' }, { n: 'boxB' },
  { sep: true, w: 'w-[18px]' }, { n: 'grayDim' }, { n: 'blueDim' },
  { gap: true, w: 'w-[21px]' }, { sep: true }, { n: 'cursorO', w: 'w-[20px]', dd: true },
];

const rowOne: Item[] = [
  { gap: true, w: 'w-[20px]' }, { sep: true, w: 'w-[22px]' }, { n: 'point', w: 'w-[24px]' }, { n: 'curve', w: 'w-[29px]' }, { n: 'surf' }, { n: 'tile' },
  { sep: true, long: true, w: 'w-[6px]' }, { n: 'boxPick' }, { n: 'boxPick2', w: 'w-[30px]' },
  { sep: true, long: true, w: 'w-[6px]' }, { n: 'stack', w: 'w-[32px]', dd: true },
  { sep: true, long: true, w: 'w-[7px]' }, { n: 'gridPick' },
  { sep: true, long: true, w: 'w-[6px]' }, { n: 'spark', w: 'w-[36px]' },
  { sep: true, w: 'w-[30px]' }, { n: 'layers', w: 'w-[12px]', dd: true },
  { gap: true, w: 'w-[32px]' }, { sep: true, w: 'w-[10px]' }, { n: 'sculpt', w: 'w-[32px]' }, { n: 'layers2', w: 'w-[26px]' }, { n: 'capsule', w: 'w-[30px]' }, { n: 'ribbed', w: 'w-[26px]' },
  { gap: true, w: 'w-[17px]' }, { sep: true, w: 'w-[10px]' }, { n: 'cylY', w: 'w-[36px]', dd: true }, { n: 'meshA', w: 'w-[26px]' }, { n: 'meshB', w: 'w-[30px]' },
  { gap: true, w: 'w-[83px]' }, { sep: true, w: 'w-[10px]' }, { n: 'wave', w: 'w-[32px]' }, { n: 'surfY', w: 'w-[26px]' }, { n: 'fillet' }, { n: 'twoArc' }, { n: 'cubePick' },
  { gap: true, w: 'w-[22px]' }, { sep: true, w: 'w-[10px]' }, { n: 'point', w: 'w-[34px]' }, { n: 'line', w: 'w-[22px]' }, { n: 'para', w: 'w-[32px]' }, { n: 'circle', w: 'w-[26px]' },
  { n: 'sweep', w: 'w-[32px]' }, { n: 'patch', w: 'w-[22px]' }, { n: 'arch', w: 'w-[32px]' }, { n: 'hatch', w: 'w-[24px]' }, { n: 'blob', w: 'w-[34px]' }, { n: 'spring', w: 'w-[20px]' }, { n: 'spiral', w: 'w-[36px]' },
  { gap: true, w: 'w-[8px]' }, { sep: true, w: 'w-[10px]' }, { n: 'mail', w: 'w-[34px]' }, { n: 'fourBox', w: 'w-[24px]' }, { n: 'qBox', w: 'w-[32px]' },
  { gap: true, w: 'w-[20px]' }, { sep: true, w: 'w-[10px]' }, { n: 'gauge', w: 'w-[34px]' }, { n: 'gauge2', w: 'w-[22px]' }, { n: 'gauge3', w: 'w-[32px]' },
];

const rowTwoA: Item[] = [
  { gap: true, w: 'w-[4px]' }, { sep: true, w: 'w-[24px]' }, { n: 'insert', w: 'w-[18px]' },
  { gap: true, w: 'w-[19px]' }, { sep: true, w: 'w-[10px]' }, { n: 'measure', w: 'w-[34px]' }, { n: 'caliper', w: 'w-[22px]' }, { n: 'weight', w: 'w-[30px]' },
  { gap: true, w: 'w-[10px]' }, { sep: true, w: 'w-[10px]' }, { n: 'camera', w: 'w-[32px]' },
  { sep: true, w: 'w-[24px]' }, { n: 'swirl', w: 'w-[20px]' }, { n: 'hand', w: 'w-[36px]' }, { n: 'axis', w: 'w-[22px]' }, { n: 'num', w: 'w-[30px]' },
  { n: 'cubeAx', dd: true }, { n: 'link', w: 'w-[32px]' }, { n: 'rows', w: 'w-[22px]', dd: true }, { n: 'bookC', w: 'w-[35px]' },
];

const rowTwoB: Item[] = [
  { gap: true, w: 'w-[38px]' }, { sep: true, w: 'w-[10px]' }, { n: 'liftA', w: 'w-[32px]' }, { n: 'twist', w: 'w-[26px]' }, { n: 'target' }, { n: 'stackT', w: 'w-[30px]' },
  { sep: true, w: 'w-[20px]' }, { n: 'fistO', w: 'w-[22px]' },
  { gap: true, w: 'w-[111px]' }, { sep: true, w: 'w-[10px]' }, { gap: true, w: 'w-[6px]' },
];

const sideOne: { n?: string; h: string; dd?: boolean; sep?: boolean }[] = [
  { h: 'h-[58px]' }, { sep: true, h: 'h-[10px]' }, { n: 'pad', h: 'h-[32px]', dd: true }, { n: 'pocket', h: 'h-[32px]', dd: true }, { n: 'shaft', h: 'h-[28px]' },
  { n: 'groove', h: 'h-[26px]' }, { n: 'hole', h: 'h-[26px]' }, { n: 'rib', h: 'h-[34px]' }, { n: 'slot', h: 'h-[20px]' }, { n: 'stiff', h: 'h-[36px]', dd: true },
  { n: 'solid', h: 'h-[24px]' }, { n: 'remove', h: 'h-[30px]' }, { h: 'h-[13px]' }, { sep: true, h: 'h-[10px]' }, { n: 'penPad', h: 'h-[30px]', dd: true },
  { n: 'folderPad', h: 'h-[34px]', dd: true }, { h: 'h-[15px]' }, { sep: true, h: 'h-[10px]' }, { n: 'abc', h: 'h-[26px]', dd: true }, { n: 'flag', h: 'h-[40px]', dd: true }, { n: 'stamp', h: 'h-[20px]' },
];

const sideTwo: { n?: string; h: string; dd?: boolean; sep?: boolean; long?: boolean }[] = [
  { h: 'h-[1px]' }, { sep: true, h: 'h-[10px]' }, { n: 'gearT', h: 'h-[30px]' }, { h: 'h-[19px]' }, { sep: true, h: 'h-[10px]' }, { n: 'sketch', h: 'h-[38px]', dd: true },
  { sep: true, h: 'h-[12px]' }, { n: 'round', h: 'h-[32px]', dd: true }, { n: 'chamfer', h: 'h-[24px]' }, { n: 'cubeY', h: 'h-[36px]', dd: true }, { n: 'sCurve', h: 'h-[24px]' },
  { n: 'gridArrow', h: 'h-[34px]' }, { n: 'crosshair', h: 'h-[22px]' }, { n: 'boxX', h: 'h-[38px]', dd: true }, { sep: true, h: 'h-[8px]' }, { n: 'cylArrow', h: 'h-[32px]', dd: true },
  { sep: true, long: true, h: 'h-[8px]' }, { n: 'cylPlane', h: 'h-[26px]' }, { n: 'arrowDots', h: 'h-[34px]', dd: true }, { sep: true, long: true, h: 'h-[4px]' },
  { n: 'orb', h: 'h-[34px]', dd: true }, { h: 'h-[17px]' }, { sep: true, h: 'h-[8px]' }, { n: 'partA', h: 'h-[34px]' }, { sep: true, long: true, h: 'h-[2px]' },
  { n: 'partB', h: 'h-[38px]', dd: true }, { n: 'partC', h: 'h-[18px]' }, { h: 'h-[8px]' }, { sep: true, long: true, h: 'h-[12px]' }, { n: 'pair', h: 'h-[16px]' },
];

function SideColumn({ items, w }: { items: { n?: string; h: string; dd?: boolean; sep?: boolean; long?: boolean }[]; w: string }) {
  return (
    <div className={`${w} flex flex-col shrink-0`}>
      {items.map((it, i) => {
        if (it.sep)
          return (
            <div key={i} className={`${it.h} flex items-center pl-[4px]`}>
              <div className={`h-[2px] bg-[#f2f2fa] border-b border-[#aaaabc] ${it.long ? 'w-full' : 'w-[17px]'}`} />
            </div>
          );
        if (!it.n) return <div key={i} className={it.h} />;
        return (
          <div key={i} className={`relative ${it.h} flex items-center justify-center`}>
            <Icon name={it.n} />
            {it.dd && <span className="absolute top-1/2 mt-[12px] left-1/2 ml-[8px] w-0 h-0 border-x-[5px] border-x-transparent border-t-[5px] border-t-[#101018]" />}
          </div>
        );
      })}
    </div>
  );
}

function Combo({ text, w, off }: { text: string; w: string; off?: boolean }) {
  return (
    <div className={`${w} h-[23px] shrink-0 flex border border-t-[#8a8a8a] border-l-[#8a8a8a] border-r-[#f4f4f8] border-b-[#f4f4f8] ${off ? 'bg-[#eeeef2] text-[#9a9aa2]' : 'bg-white text-[#20202a]'}`}>
      <span className="flex-1 whitespace-nowrap pl-[2px] leading-[20px] text-[11.5px]">{text}</span>
      <span className="w-[16px] shrink-0 flex items-center justify-center bg-[#d8d8e0] border border-t-white border-l-white border-r-[#70707a] border-b-[#70707a]">
        <span className={`w-0 h-0 border-x-[4px] border-x-transparent border-t-[4px] ${off ? 'border-t-[#9a9aa2]' : 'border-t-[#101018]'}`} />
      </span>
    </div>
  );
}

function AppLogo() {
  return (
    <svg viewBox="0 0 16 16" preserveAspectRatio="none" className="w-[18px] h-[16px] shrink-0">
      <rect width="16" height="16" fill="#0a1440" />
      <path d="M0 16l4-9 12-7v7l-6 9z" fill="#2a62b0" />
      <circle cx="10" cy="8" r="4.5" fill="#f49a28" />
      <circle cx="10.5" cy="7.5" r="2" fill="#fde8a0" />
    </svg>
  );
}

function PlaneIcon() {
  return (
    <svg viewBox="0 0 29 29" className="w-[29px] h-[28px] shrink-0">
      <defs>
        <pattern id="dither" width="2" height="2" patternUnits="userSpaceOnUse">
          <rect width="2" height="2" fill="#5b5a88" />
          <rect width="1" height="1" fill="#c0c0d8" />
          <rect x="1" y="1" width="1" height="1" fill="#b0b0cc" />
        </pattern>
      </defs>
      <rect width="29" height="28" fill="url(#dither)" />
      <path d="M1 20l8-7h18l-8 7z" fill="#d8c878" stroke="#2c5a6c" />
      <path d="M2 21h18" stroke="#f0f0f8" />
      <path d="M4 15l8-4h6" stroke="#e8e8f0" fill="none" />
    </svg>
  );
}

function Plus() {
  return (
    <span className="absolute left-[5px] top-1/2 -translate-y-1/2 w-[15px] h-[15px] rounded-full bg-[#88888e] flex items-center justify-center">
      <span className="relative w-[11px] h-[3px] bg-[#08080c]">
        <span className="absolute left-[4px] -top-[4px] w-[3px] h-[11px] bg-[#08080c]" />
      </span>
    </span>
  );
}

function Branch() {
  return <span className="absolute left-[12px] top-1/2 -translate-y-1/2 w-[15px] h-[2px] bg-[#e8e8f0]" />;
}

function Tree() {
  return (
    <div className="relative pt-[78px] text-[#f0f0f8] font-['DejaVu_Sans',sans-serif] text-[15px] leading-[20px] tracking-[0.2px]">
      <span className="absolute left-[11px] top-[104px] w-[2px] h-[170px] bg-[#f0f0f8]" />
      <div className="relative h-[37px] flex items-center pl-[2px]">
        <svg viewBox="0 0 34 30" className="w-[34px] h-[30px] shrink-0">
          <path d="M9 1h12l7 7v16H9z" fill="#fff" />
          <path d="M21 1l7 7h-7z" fill="#40c8e0" />
          <circle cx="10" cy="18" r="6.5" fill="#2a2a30" stroke="#e8d070" strokeWidth="5" strokeDasharray="3 1.6" />
          <circle cx="10" cy="18" r="2.8" fill="#f4e070" />
        </svg>
        <span className="-ml-[1px] mt-[8px]">Sola Torrella Pag 115</span>
      </div>
      {['xy plane', 'yz plane', 'zx plane'].map((t) => (
        <div key={t} className="relative h-[35px] flex items-center pl-[28px]">
          <Branch />
          <PlaneIcon />
          <span className="ml-[3px] mt-[8px]">{t}</span>
        </div>
      ))}
      <div className="relative h-[35px] flex items-center pl-[28px]">
        <Branch />
        <Plus />
        <svg viewBox="0 0 26 26" className="w-[26px] h-[28px] shrink-0">
          <path d="M12 2v13M12 15h12M12 15L2 24" fill="none" stroke="#e8e4c8" strokeWidth="1.2" />
          <path d="M10 5l2-3 2 3M22 13l2 2-2 2" fill="none" stroke="#e8e4c8" />
        </svg>
        <span className="ml-[6px] mt-[9px] tracking-[-0.1px]">Axis Systems</span>
      </div>
      <div className="relative h-[35px] flex items-center pl-[28px]">
        <Branch />
        <Plus />
        <svg viewBox="0 0 28 28" className="w-[28px] h-[28px] shrink-0">
          <circle cx="14" cy="14" r="9" fill="#1a5a60" stroke="#38d8d0" strokeWidth="5" strokeDasharray="3.4 2" />
          <circle cx="14" cy="14" r="4.5" fill="#58e088" stroke="#102030" />
          <circle cx="14" cy="14" r="1.6" fill="#0a1020" />
        </svg>
        <span className="ml-[4px] mt-[10px]">PartBody</span>
      </div>
    </div>
  );
}

// Coordinates below are page pixels: the viewBox starts where the canvas starts.
function Model() {
  const edge = { stroke: '#05050f', strokeWidth: 2, strokeLinejoin: 'round' as const };
  return (
    <svg viewBox="1 79 1522 803" className="absolute inset-0 w-[1522px] h-[803px]">
      <defs>
        <linearGradient id="wall" x1="0" x2="1" y1="0" y2="0">
          <stop offset="0" stopColor="#75759a" />
          <stop offset="0.5" stopColor="#8a8aa8" />
          <stop offset="1" stopColor="#9292b0" />
        </linearGradient>
        <linearGradient id="wallDark" x1="0" x2="1" y1="0" y2="0">
          <stop offset="0" stopColor="#8a8aa8" />
          <stop offset="1" stopColor="#6a6a8c" />
        </linearGradient>
        <linearGradient id="shaft" x1="0" x2="1" y1="0" y2="0">
          <stop offset="0" stopColor="#a0a0c2" />
          <stop offset="0.12" stopColor="#7c7ca2" />
          <stop offset="0.6" stopColor="#8888a8" />
          <stop offset="0.9" stopColor="#8e8eae" />
          <stop offset="1" stopColor="#a6a6c6" />
        </linearGradient>
        <linearGradient id="rim" x1="0" x2="1" y1="0" y2="0">
          <stop offset="0" stopColor="#6f6f90" />
          <stop offset="0.25" stopColor="#85859f" />
          <stop offset="0.7" stopColor="#8f8fae" />
          <stop offset="1" stopColor="#a0a0be" />
        </linearGradient>
        <linearGradient id="flange" x1="0" x2="1" y1="0" y2="1">
          <stop offset="0" stopColor="#cfcff4" />
          <stop offset="0.55" stopColor="#c2c2ea" />
          <stop offset="1" stopColor="#bebee6" />
        </linearGradient>
        <radialGradient id="hole" cx="0.55" cy="0.6" r="0.6">
          <stop offset="0" stopColor="#a4a4c4" />
          <stop offset="1" stopColor="#8282a2" />
        </radialGradient>
        <radialGradient id="shine">
          <stop offset="0" stopColor="#ffffff" />
          <stop offset="0.4" stopColor="#f2f2ff" stopOpacity="0.8" />
          <stop offset="1" stopColor="#c8c8f2" stopOpacity="0" />
        </radialGradient>
        <filter id="soft" x="-30%" y="-30%" width="160%" height="160%">
          <feGaussianBlur stdDeviation="9" />
        </filter>
        <filter id="softer" x="-10%" y="-10%" width="120%" height="130%">
          <feGaussianBlur stdDeviation="2.5" />
        </filter>
      </defs>

      <g transform="rotate(-0.5 777 652)">
        <path d="M564 652v43a213 123 0 0 0 426 0v-43z" fill="url(#rim)" {...edge} />
        <ellipse cx="777" cy="652" rx="213" ry="123" fill="url(#flange)" {...edge} />
      </g>
      <ellipse cx="662" cy="588" rx="22" ry="12.5" fill="url(#hole)" {...edge} strokeDasharray="3 0.4" />
      <ellipse cx="888" cy="586" rx="22" ry="12.5" fill="url(#hole)" {...edge} strokeDasharray="3 0.4" />
      <ellipse cx="663" cy="719" rx="22" ry="12.5" fill="url(#hole)" {...edge} strokeDasharray="3 0.4" />
      <ellipse cx="889" cy="717" rx="22" ry="12.5" fill="url(#hole)" {...edge} strokeDasharray="3 0.4" />
      <ellipse cx="777" cy="640" rx="80" ry="42" fill="#8286b2" filter="url(#soft)" />
      <ellipse cx="780" cy="693" rx="44" ry="9" fill="url(#shine)" />

      <path d="M706 600V633A70 39 0 0 0 845 633V600z" fill="url(#shaft)" filter="url(#softer)" />
      <path d="M706 480V620H845V480z" fill="url(#shaft)" />

      <path d="M676 148L702 152A88 52 0 0 0 691 176L676 173z" fill="url(#wallDark)" {...edge} />
      <path d="M764 113L771 128H764z" fill="#6e6e90" {...edge} />
      <path d="M830 123L810 134L830 142z" fill="#8a8aa8" {...edge} />
      <path d="M852 174L878 177L879 481L871 480L867 202L841 197z" fill="url(#wall)" {...edge} />
      <path d="M683 209A106 62 0 0 1 666 173L667 480A60 62 0 0 0 686 512z" fill="url(#wall)" {...edge} />
      <path d="M703 198L683 209L686 512L704 502z" fill="#8c8caa" {...edge} />
      <path d="M733 215A88 52 0 0 1 703 198L704 502L716 510L714 227z" fill="url(#wallDark)" {...edge} />
      <path d="M812 214A88 52 0 0 1 771 221L779 236L782 524A88 52 0 0 0 815 518z" fill="#8a8aa8" {...edge} />
      <path d="M812 214L820 229L823 533L815 518z" fill="#74749a" {...edge} />
      <path d="M868 202A106 62 0 0 1 820 229L823 533A106 62 0 0 0 870 506z" fill="url(#wall)" {...edge} />
      <path d="M779 236A106 62 0 0 1 714 227L716 530A106 62 0 0 0 782 540z" fill="url(#wall)" {...edge} />
      <path
        d="M764 113A106 62 0 0 1 830 123L810 134A88 52 0 0 1 840 152L859 140A106 62 0 0 1 878 177L852 174A88 52 0 0 1 841 197L868 202A106 62 0 0 1 820 229L812 214A88 52 0 0 1 771 221L779 236A106 62 0 0 1 714 227L733 215A88 52 0 0 1 703 198L683 209A106 62 0 0 1 666 173L691 176A88 52 0 0 1 702 152L676 148A106 62 0 0 1 723 121L731 135A88 52 0 0 1 771 128z"
        fill="#c4c4ec"
        {...edge}
      />

      {/* compass */}
      <path d="M1442 108C1425 122 1419 138 1418 150L1442 137L1468 150C1466 138 1459 122 1442 108z" fill="#1c4a66" />
      <path d="M1418 150C1413 168 1430 174 1442 174C1456 174 1472 168 1468 150L1442 164z" fill="#1c4a66" />
      <g fill="none" stroke="#c6c4ec" strokeWidth="2.4" strokeLinejoin="round">
        <path d="M1442 104V164M1442 108C1425 122 1419 138 1418 150L1442 137L1468 150C1466 138 1459 122 1442 108z" />
        <path d="M1418 160L1442 145L1468 158M1418 160C1416 168 1430 174 1442 174C1456 174 1470 168 1468 158" />
      </g>
      <circle cx="1442" cy="100" r="3.6" fill="#d4c8f0" />
      <rect x="1438" y="154" width="9" height="9" fill="#d80c18" />
      <g fontFamily="Liberation Sans" fontSize="9" fill="#f4e478" fontWeight="700">
        <text x="1443" y="109">z</text>
        <text x="1420" y="157" textAnchor="end">x</text>
        <text x="1466" y="157">y</text>
      </g>

      {/* small axis, bottom right */}
      <path d="M1498 849V866M1498 866L1485 874M1498 866L1511 874" stroke="#f4f4fa" fill="none" strokeWidth="1.2" />
      <g fontFamily="Liberation Sans" fontSize="10" fill="#f4f4fa">
        <text x="1495" y="849">z</text>
        <text x="1483" y="871">x</text>
        <text x="1511" y="871">y</text>
      </g>
    </svg>
  );
}

export default function App() {
  return (
    <div className="w-[1600px] h-[984px] flex flex-col overflow-hidden bg-[#cfd0e6] font-['Noto_Sans',sans-serif] text-[11.6px] text-[#20202a]">
      {/* title bar */}
      <div className="h-[20px] shrink-0 flex items-center bg-[linear-gradient(90deg,#6a6a6a_0,#666_190px,#1d1b20_225px,#242228_800px,#121014_1000px)]">
        <AppLogo />
        <span className="ml-[4px] text-[#0c0c0c] whitespace-nowrap">DELMIA V5 - [Sola Torrella Pag 115]</span>
        <div className="ml-auto mr-[3px] flex h-[17px] self-start text-white">
          <div className="w-[29px] flex items-center justify-center border border-t-0 border-[#6c6c70] rounded-bl-[3px]">
            <span className="w-[11px] h-[3px] bg-white mt-[4px]" />
          </div>
          <div className="w-[27px] flex items-center justify-center border-y border-r border-t-0 border-[#6c6c70]">
            <span className="w-[9px] h-[9px] border-2 border-white" />
          </div>
          <div className="w-[47px] flex items-center justify-center border-y border-r border-t-0 border-[#6c6c70] rounded-br-[3px]">
            <svg viewBox="0 0 10 10" className="w-[10px] h-[10px]"><path d="M1 1l8 8M9 1l-8 8" stroke="#fff" strokeWidth="2.4" /></svg>
          </div>
        </div>
      </div>
      <div className="h-[2px] shrink-0 bg-[#c8c8d0] border-t border-[#8a8a92]" />

      {/* menu bar */}
      <div className="h-[19px] shrink-0 flex items-center pr-[1px]">
        <AppLogo />
        <span className="h-full w-[50px] bg-[#fcdcb0] flex items-center pl-[10px]"><span><u>S</u>tart</span></span>
        <span className="ml-[8px] w-[100px]">ENOVIA V5 VPM</span>
        <span className="w-[42px]"><u>F</u>ile</span>
        <span className="w-[44px]"><u>E</u>dit</span>
        <span className="w-[49px]"><u>V</u>iew</span>
        <span className="w-[53px]"><u>I</u>nsert</span>
        <span className="w-[53px]"><u>T</u>ools</span>
        <span className="w-[68px]"><u>W</u>indow</span>
        <span><u>H</u>elp</span>
        <div className="ml-auto flex gap-[1px]">
          <span className="w-[18px] h-[17px] bg-[#cfe2ee] border border-[#eef4fa] flex items-end justify-center pb-[3px]"><span className="w-[6px] h-[2px] bg-[#70708c]" /></span>
          <span className="w-[18px] h-[17px] bg-[#cfe2ee] border border-[#eef4fa] flex items-center justify-center"><span className="w-[8px] h-[8px] border border-[#70708c]" /></span>
          <span className="w-[18px] h-[17px] bg-[#cfe2ee] border border-[#eef4fa] flex items-center justify-center">
            <svg viewBox="0 0 8 8" className="w-[8px] h-[8px]"><path d="M1 1l6 6M7 1l-6 6" stroke="#70708c" strokeWidth="1.8" /></svg>
          </span>
        </div>
      </div>

      {/* top toolbar */}
      <div className="h-[37px] shrink-0 flex items-center bg-[linear-gradient(180deg,#fff_0,#f2f2fa_4px,#cfd0e6_14px,#cfd0e6_27px,#a6a6b6_37px)]">
        <Bar items={topBar} />
      </div>
      <div className="h-[1px] shrink-0 bg-[#5e5e66]" />

      {/* canvas and right panel */}
      <div className="h-[803px] shrink-0 flex">
        <div className="relative w-[1523px] shrink-0 bg-[#343163] border-l border-[#9a9aa4] overflow-hidden">
          <Model />
          <Tree />
        </div>
        <div className="flex-1 flex bg-[linear-gradient(90deg,#fff_0,#ebebf6_4px,#cfd0e6_12px,#cfd0e6_66px,#b8b8ca_77px)]">
          <SideColumn items={sideOne} w="w-[39px]" />
          <SideColumn items={sideTwo} w="w-[38px]" />
        </div>
      </div>

      {/* bottom toolbars */}
      <div className="h-[41px] shrink-0 flex items-center bg-[linear-gradient(180deg,#fff_0,#f2f2fa_3px,#cfd0e6_11px)]">
        <Bar items={rowOne} />
        <div className="ml-auto mr-[4px] w-[53px] h-[34px] self-start relative flex flex-col items-end justify-end">
          <svg viewBox="0 0 24 25" className="absolute left-[2px] top-[1px] w-[24px] h-[25px]">
            <path d="M10 2c5-2 10-1 8 2-1 2-4 3-7 4 4 0 6 1 6 4" fill="none" stroke="#d03038" strokeWidth="1.6" />
            <path d="M17 12c-3 3-1 6 1 8-2 3-5 4-9 3" fill="none" stroke="#c08018" strokeWidth="1.6" />
            <path d="M2 23c0-6 3-9 6-10 3 2 3 7-3 10" fill="none" stroke="#303088" strokeWidth="1.6" />
          </svg>
          <span className="font-['Liberation_Sans',sans-serif] italic font-bold text-[12px] leading-none text-[#33307a] tracking-[0.4px]">DELMIA</span>
        </div>
      </div>
      <div className="h-[35px] shrink-0 flex items-center pt-[4px] bg-[linear-gradient(180deg,#cfd0e6_0,#cfd0e6_24px,#a6a6b6_35px)]">
        <Bar items={rowTwoA} />
        <Combo text="PartBody" w="w-[163px]" />
        <Bar items={rowTwoB} />
        <Combo text="Automa" w="w-[62px]" />
        <div className="w-[4px] shrink-0" />
        <Combo text="25%" w="w-[63px]" />
        <div className="w-[5px] shrink-0" />
        <Combo text="Auto" w="w-[61px]" />
        <div className="w-[6px] shrink-0" />
        <Combo text="Auto" w="w-[61px]" />
        <div className="w-[6px] shrink-0" />
        <Combo text="Aut" w="w-[40px]" />
        <div className="w-[5px] shrink-0" />
        <Combo text="Aut" w="w-[39px]" off />
        <div className="w-[4px] shrink-0" />
        <Combo text="None" w="w-[63px]" />
        <Bar items={[{ n: 'brush', w: 'w-[30px]' }, { n: 'ball', w: 'w-[26px]' }]} />
      </div>
      <div className="h-[1px] shrink-0 bg-[#5e5e66]" />

      {/* status bar */}
      <div className="flex-1 min-h-0 flex items-center pl-[3px]">
        <span className="text-[11.3px]">Select an object or a command</span>
        <div className="ml-auto w-[297px] h-[18px] bg-white border border-t-[#8a8a8a] border-l-[#8a8a8a] border-r-[#f0f0f6] border-b-[#f0f0f6]" />
        <span className="ml-[2px] w-[30px] h-[21px] bg-[#d4d4e4] border border-t-white border-l-white border-r-[#9a9aaa] border-b-[#9a9aaa] flex items-center justify-center">
          <span className="w-[10px] h-[10px] border border-[#8a8a9a]" />
        </span>
        <span className="ml-[3px] w-[33px] h-[21px] bg-[#d4d4e4] border border-t-white border-l-white border-r-[#9a9aaa] border-b-[#9a9aaa] flex items-center justify-center">
          <span className="w-[10px] h-[10px] border border-[#8a8a9a] rounded-[2px]" />
        </span>
      </div>
    </div>
  );
}
